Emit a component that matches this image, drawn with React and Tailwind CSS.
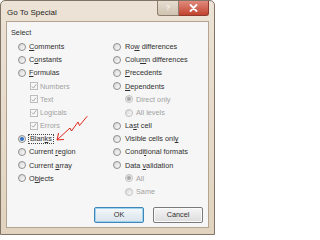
import React from "react";

const FONT = { fontFamily: '"Liberation Sans", Arial, sans-serif' };

function Radio({ checked, disabled }) {
  return (
    <span
      className={`flex h-[8px] w-[8px] shrink-0 items-center justify-center rounded-full border ${
        disabled ? "border-[#c2c2c2]" : "border-[#8e8e8e]"
      } bg-linear-to-br from-[#d6d6d6] to-[#fcfcfc]`}
    >
      {checked ? (
        <span
          className={`h-[4px] w-[4px] rounded-full ${
            disabled ? "bg-[#a9a9a9]" : "bg-[#2c6fc0]"
          }`}
        />
      ) : null}
    </span>
  );
}

function Check() {
  return (
    <span className="flex h-[8px] w-[8px] shrink-0 items-center justify-center border border-[#bdbdbd] bg-[#f7f7f7]">
      <svg width="7" height="7" viewBox="0 0 7 7">
        <path d="M1 3.6 L2.8 5.4 L6 1.2" fill="none" stroke="#a3a3a3" strokeWidth="1.1" />
      </svg>
    </span>
  );
}

function U({ children }) {
  return <span className="underline decoration-[0.6px] underline-offset-[1px]">{children}</span>;
}

function Row({ control, sub, disabled, gap, children }) {
  return (
    <div className={`flex h-[13.2px] items-center ${sub ? "pl-[12px]" : ""} ${gap}`}>
      {control}
      <span className={`whitespace-nowrap leading-none ${disabled ? "text-[#a2a2a2]" : "text-[#303030]"}`}>
        {children}
      </span>
    </div>
  );
}

export default function App() {
  return (
    <div
      className="relative flex h-[235px] w-[215px] flex-col overflow-hidden rounded-t-[5px] border border-[#7f7466] bg-linear-to-b from-[#ece3d6] to-[#e1d3bf]"
      style={FONT}
    >
      {/* Title bar */}
      <div className="flex h-[20px] shrink-0 items-start">
        <div className="pl-[6px] pt-[8px] text-[8px] leading-none text-[#1e1e1e]">Go To Special</div>
        <div className="ml-auto mr-[5px] flex">
          <div className="flex h-[15px] w-[22px] items-center justify-center rounded-bl-[3px] border border-t-0 border-[#8a7d6d] bg-linear-to-b from-[#e6ddd0] to-[#cfc2b0] text-[8px] font-bold leading-none text-[#f4f0ea]">
            ?
          </div>
          <div className="flex h-[15px] w-[30px] items-center justify-center rounded-br-[3px] border border-l-0 border-t-0 border-[#8e3a2c] bg-linear-to-b from-[#e08a7c] to-[#c2412f]">
            <svg width="9" height="8" viewBox="0 0 9 8">
              <path d="M1.5 1 L7.5 7 M7.5 1 L1.5 7" stroke="#ffffff" strokeWidth="1.8" strokeLinecap="round" />
            </svg>
          </div>
        </div>
      </div>

      {/* Client area */}
      <div className="mx-[5px] mb-[6px] flex flex-1 flex-col border border-[#b3a48e] bg-[#f6f6f6] text-[7.3px]">
        <div className="flex h-[14px] items-center pl-[4px] pt-[5px] leading-none text-[#303030]">
          <span className="pt-[2px]">Select</span>
        </div>

        <div className="mt-[4px] flex pl-[11px]">
          {/* Left column */}
          <div className="flex w-[95px] flex-col">
            <Row control={<Radio />} gap="gap-[3px]"><U>C</U>omments</Row>
            <Row control={<Radio />} gap="gap-[3px]">C<U>o</U>nstants</Row>
            <Row control={<Radio />} gap="gap-[3px]"><U>F</U>ormulas</Row>
            <Row sub disabled control={<Check />} gap="gap-[2px]">Numbers</Row>
            <Row sub disabled control={<Check />} gap="gap-[2px]">Text</Row>
            <Row sub disabled control={<Check />} gap="gap-[2px]">Logicals</Row>
            <Row sub disabled control={<Check />} gap="gap-[2px]">Errors</Row>
            <div className="flex h-[13.2px] items-center gap-[2px]">
              <Radio checked />
              <span className="border border-dotted border-[#444] px-[1px] py-[0.5px] leading-none text-[#303030]">
                Blan<U>k</U>s
              </span>
            </div>
            <Row control={<Radio />} gap="gap-[3px]">Current <U>r</U>egion</Row>
            <Row control={<Radio />} gap="gap-[3px]">Current <U>a</U>rray</Row>
            <Row control={<Radio />} gap="gap-[3px]">O<U>b</U>jects</Row>
          </div>

          {/* Right column */}
          <div className="flex flex-col">
            <Row control={<Radio />} gap="gap-[4px]">Ro<U>w</U> differences</Row>
            <Row control={<Radio />} gap="gap-[4px]">Colu<U>m</U>n differences</Row>
            <Row control={<Radio />} gap="gap-[4px]"><U>P</U>recedents</Row>
            <Row control={<Radio />} gap="gap-[4px]"><U>D</U>ependents</Row>
            <Row sub disabled control={<Radio checked disabled />} gap="gap-[3px]">Direct only</Row>
            <Row sub disabled control={<Radio disabled />} gap="gap-[3px]">All levels</Row>
            <Row control={<Radio />} gap="gap-[4px]">La<U>s</U>t cell</Row>
            <Row control={<Radio />} gap="gap-[4px]">Visible cells onl<U>y</U></Row>
            <Row control={<Radio />} gap="gap-[4px]">Condi<U>t</U>ional formats</Row>
            <Row control={<Radio />} gap="gap-[4px]">Data <U>v</U>alidation</Row>
            <Row sub disabled control={<Radio checked disabled />} gap="gap-[3px]">All</Row>
            <Row sub disabled control={<Radio disabled />} gap="gap-[3px]">Same</Row>
          </div>
        </div>

        {/* Buttons */}
        <div className="mt-auto flex justify-end gap-[9px] pb-[4px] pr-[5px]">
          <div className="flex h-[16px] w-[50px] items-center justify-center rounded-[2px] border border-[#3f86b8] bg-linear-to-b from-[#f4f8fb] to-[#d9e3ea] leading-none text-[#303030] shadow-[inset_0_0_0_1px_#9fd2ee]">
            OK
          </div>
          <div className="flex h-[16px] w-[50px] items-center justify-center rounded-[2px] border border-[#7a7a7a] bg-linear-to-b from-[#f6f6f6] to-[#dcdcdc] leading-none text-[#303030] shadow-[inset_0_0_0_1px_#fbfbfb]">
            Cancel
          </div>
        </div>
      </div>

      {/* Hand-drawn red arrow annotation */}
      <svg
        className="pointer-events-none absolute left-[-1px] top-[-1px]"
        width="215"
        height="235"
        viewBox="0 0 215 235"
      >
        <path
          d="M87 116.5 L79.5 125.5 L78 122 L71.5 131 L70 128 L57.5 139.5"
          fill="none"
          stroke="#e0251c"
          strokeWidth="1"
          strokeLinejoin="round"
          strokeLinecap="round"
        />
        <path
          d="M58.5 133.5 L57 140 L63.5 139.5"
          fill="none"
          stroke="#e0251c"
          strokeWidth="1"
          strokeLinejoin="round"
          strokeLinecap="round"
        />
      </svg>
    </div>
  );
}
